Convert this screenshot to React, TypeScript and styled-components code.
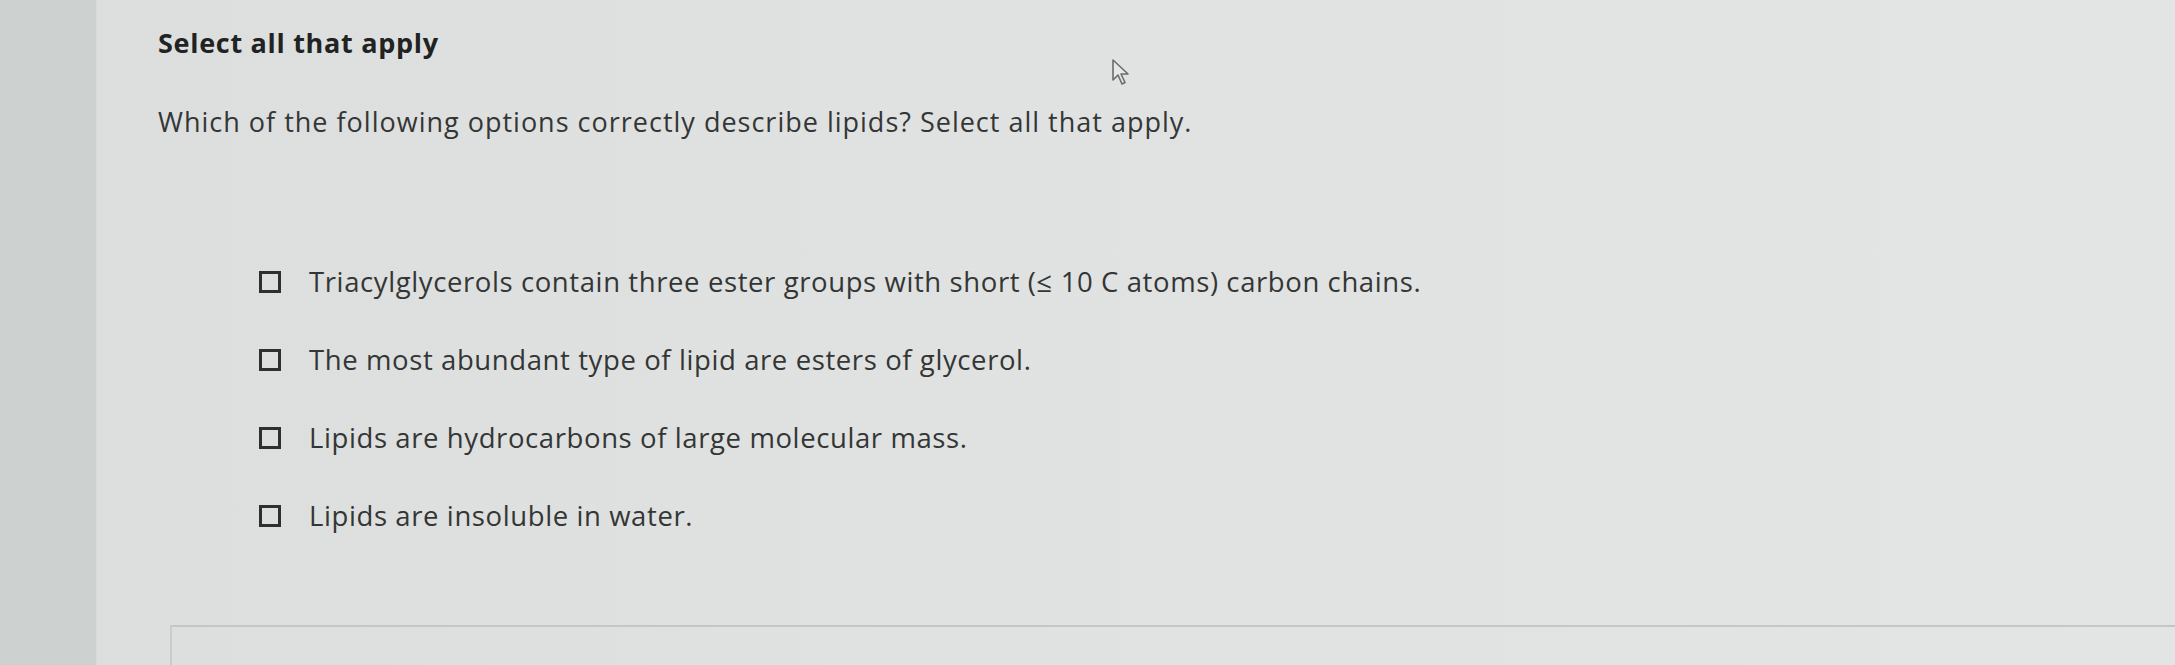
import React from "react";
import styled, { createGlobalStyle } from "styled-components";

const GlobalStyle = createGlobalStyle`
	html, body {
		margin: 0;
		padding: 0;
		background: #dfe1e0;
	}
	body {
		font-family: "Open Sans", Lato, "Liberation Sans", sans-serif;
	}
`;

const Page = styled.div`
	position: relative;
	display: flex;
	width: 100%;
	height: 665px;
	overflow: hidden;
	background: linear-gradient(90deg, #dcdedd 0%, #e0e2e1 40%, #e3e5e4 100%);
`;

const LeftRail = styled.div`
	width: 96px;
	flex-shrink: 0;
	background: #cdd1cf;
	border-right: 1px solid #d7dad9;
`;

const Main = styled.main`
	flex: 1;
	display: flex;
	flex-direction: column;
	padding: 26px 0 0 61px;
	color: #343636;
`;

const Heading = styled.h2`
	margin: 0;
	font-size: 27px;
	font-weight: 700;
	line-height: 34px;
	color: #212323;
	letter-spacing: 0.7px;
`;

const Prompt = styled.p`
	margin: 46px 0 0;
	font-size: 27px;
	line-height: 32px;
	letter-spacing: 1px;
`;

const OptionList = styled.ul`
	list-style: none;
	margin: 127px 0 0 101px;
	padding: 0;
	display: flex;
	flex-direction: column;
	gap: 45px;
`;

const OptionRow = styled.li`
	display: flex;
	align-items: center;
	height: 33px;
	font-size: 27.5px;
	letter-spacing: 0.6px;
`;

const Box = styled.span`
	width: 16px;
	height: 16px;
	border: 3px solid #2d3030;
	flex-shrink: 0;
	margin-right: 28px;
`;

const AnswerBox = styled.div`
	margin: 93px 0 0 12px;
	height: 40px;
	border-top: 2px solid #c4c7c6;
	border-left: 2px solid #c9cccb;
`;

const Cursor = styled.svg`
	position: absolute;
	left: 1111px;
	top: 58px;
	width: 20px;
	height: 30px;
`;

const options = [
	"Triacylglycerols contain three ester groups with short (≤ 10 C atoms) carbon chains.",
	"The most abundant type of lipid are esters of glycerol.",
	"Lipids are hydrocarbons of large molecular mass.",
	"Lipids are insoluble in water.",
];

const App: React.FC = () => (
	<>
		<GlobalStyle />
		<Page>
			<LeftRail />
			<Main>
				<Heading>Select all that apply</Heading>
				<Prompt>
					Which of the following options correctly describe lipids? Select all
					that apply.
				</Prompt>
				<OptionList>
					{options.map((text) => (
						<OptionRow key={text}>
							<Box />
							{text}
						</OptionRow>
					))}
				</OptionList>
				<AnswerBox />
			</Main>
			<Cursor viewBox="0 0 20 30">
				<path
					d="M2 2 L2 22 L7 17 L11 26 L14 24.5 L10 16 L17 16 Z"
					fill="#e6e8e7"
					stroke="#6a6d6d"
					strokeWidth="1.6"
					strokeLinejoin="round"
				/>
			</Cursor>
		</Page>
	</>
);

export default App;
